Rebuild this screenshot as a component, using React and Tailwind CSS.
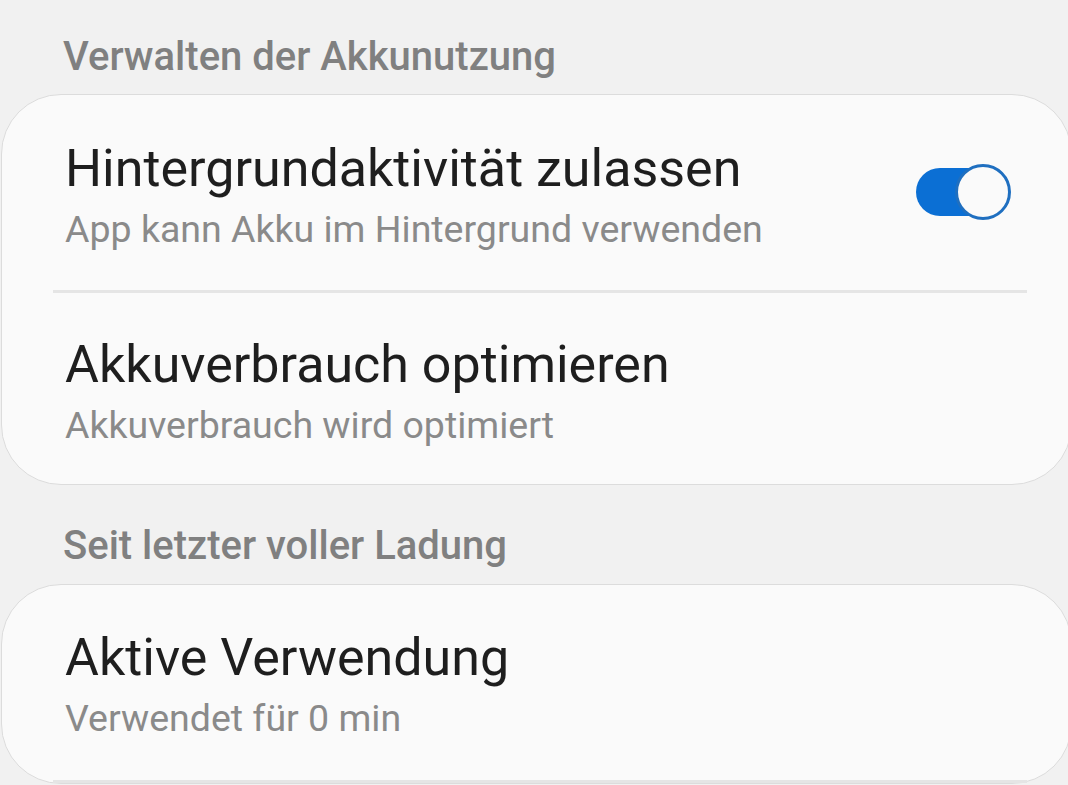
import React, { useState } from "react";

function Toggle({ on, onChange }) {
  return (
    <button
      onClick={() => onChange(!on)}
      className="relative mb-[16px] flex h-[58px] w-[95px] shrink-0 items-center"
    >
      <span
        className={`h-[48px] w-[80px] rounded-full ${on ? "bg-[#0b6fd4]" : "bg-[#b8b8b8]"}`}
      />
      <span
        className={`absolute top-[1px] h-[56px] w-[56px] rounded-full border-[3px] bg-[#fafafa] ${on ? "right-0 border-[#1f6fc0]" : "left-0 border-[#b8b8b8]"}`}
      />
    </button>
  );
}

function Row({ title, subtitle, right, divider, className = "" }) {
  return (
    <div className={`flex flex-col ${className}`}>
      <div className="flex items-center justify-between pl-[63px] pr-[60px]">
        <div className="flex flex-col">
          <span className="text-[52px] leading-[60px] text-[#1e1e1e]">{title}</span>
          <span className="text-[37.5px] leading-[61px] text-[#8a8a8a]">{subtitle}</span>
        </div>
        {right}
      </div>
      {divider && <div className="ml-[51px] mr-[44px] mt-auto h-[3px] bg-[#e5e5e5]" />}
    </div>
  );
}

export default function App() {
  const [background, setBackground] = useState(true);

  return (
    <div className="h-[785px] w-[1068px] overflow-hidden bg-[#f1f1f1] font-['Roboto',sans-serif]">
      {/* Akkunutzung */}
      <h2 className="pl-[63px] pt-[34px] text-[40px] font-medium leading-[46px] text-[#808080]">
        Verwalten der Akkunutzung
      </h2>
      <div className="ml-[1px] mr-[-4px] mt-[14px] rounded-[60px] border border-[#dcdcdc] bg-[#fafafa]">
        <Row
          className="h-[198px] pt-[44px]"
          title="Hintergrundaktivität zulassen"
          subtitle="App kann Akku im Hintergrund verwenden"
          divider
          right={<Toggle on={background} onChange={setBackground} />}
        />
        <Row
          className="h-[191px] pt-[42px]"
          title="Akkuverbrauch optimieren"
          subtitle="Akkuverbrauch wird optimiert"
        />
      </div>

      {/* Ladung */}
      <h2 className="pl-[63px] pt-[38px] text-[40px] font-medium leading-[46px] text-[#808080]">
        Seit letzter voller Ladung
      </h2>
      <div className="ml-[1px] mr-[-4px] mt-[15px] rounded-[60px] border border-[#dcdcdc] bg-[#fafafa]">
        <Row
          className="h-[198px] pt-[43px]"
          title="Aktive Verwendung"
          subtitle="Verwendet für 0 min"
          divider
        />
      </div>
    </div>
  );
}
